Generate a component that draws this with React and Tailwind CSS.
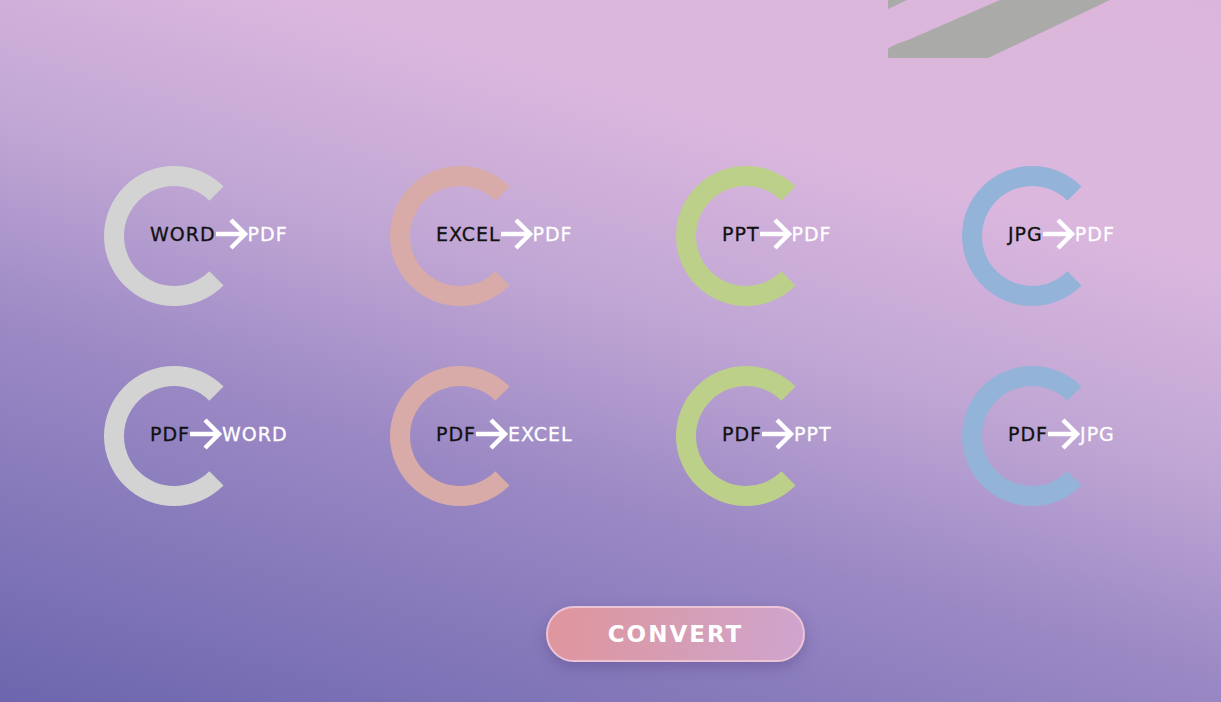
import React from 'react';

const conversions = [
  { from: 'WORD', to: 'PDF', color: '#d3d3d3' },
  { from: 'EXCEL', to: 'PDF', color: '#d8aba8' },
  { from: 'PPT', to: 'PDF', color: '#bdd08a' },
  { from: 'JPG', to: 'PDF', color: '#93b3d8' },
  { from: 'PDF', to: 'WORD', color: '#d3d3d3' },
  { from: 'PDF', to: 'EXCEL', color: '#d8aba8' },
  { from: 'PDF', to: 'PPT', color: '#bdd08a' },
  { from: 'PDF', to: 'JPG', color: '#93b3d8' }
];

// ring arc open on the right side, from 45deg to -45deg
const ringPath = () => {
  const cx = 70;
  const cy = 70;
  const ro = 70;
  const ri = 50;
  const a = (45 * Math.PI) / 180;
  const p = (r, s) => [cx + r * Math.cos(a), cy + s * r * Math.sin(a)];
  const [ox1, oy1] = p(ro, -1);
  const [ox2, oy2] = p(ro, 1);
  const [ix1, iy1] = p(ri, -1);
  const [ix2, iy2] = p(ri, 1);
  return `M${ox1} ${oy1} A${ro} ${ro} 0 1 0 ${ox2} ${oy2} L${ix2} ${iy2} A${ri} ${ri} 0 1 1 ${ix1} ${iy1} Z`;
};

const Arrow = () => (
  <svg width="32" height="34" viewBox="0 0 32 34" className="shrink-0">
    <path d="M0 17 H29 M15 3 L29 17 L15 31" fill="none" stroke="#fff" strokeWidth="4.5" strokeLinecap="butt" strokeLinejoin="miter" />
  </svg>
);

const ConvertItem = ({ from, to, color }) => (
  <div className="flex justify-center">
    <div className="relative w-[140px] h-[140px]">
      <svg width="140" height="140" viewBox="0 0 140 140">
        <path d={ringPath()} fill={color} />
      </svg>
      <div className="absolute left-[46px] top-[51px] flex items-center h-[34px] text-[19px] tracking-[1px] font-medium whitespace-nowrap font-['DejaVu_Sans',sans-serif] [-webkit-text-stroke:0.3px]">
        <span className="text-[#111]">{from}</span>
        <Arrow />
        <span className="text-white">{to}</span>
      </div>
    </div>
  </div>
);

const App = () => {
  return (
    <div className="relative w-full h-[702px] overflow-hidden bg-[linear-gradient(16deg,#6c66ae_0%,#9a88c4_35%,#c0a6d4_55%,#dbb7de_75%,#dcb6da_100%)]">
      <svg className="absolute left-[888px] top-0" width="230" height="58" viewBox="0 0 230 58">
        <path d="M0 0 L19 0 L0 9 Z" fill="#aaaaa8" />
        <path d="M0 49 Q6 44 20 40 L112 0 L222 0 L100 58 L0 58 Z" fill="#aaaaa8" />
      </svg>

      <div className="grid grid-cols-[repeat(4,286px)] gap-y-[60px] pl-[31px] pt-[166px]">
        {conversions.map((c) => (
          <ConvertItem key={c.from + c.to} {...c} />
        ))}
      </div>

      <div className="flex pl-[546px] pt-[100px]">
        <button
          type="button"
          className="w-[259px] h-[56px] rounded-full border-2 border-[#ecc4d6] bg-[linear-gradient(100deg,#e0959c_0%,#d59eb6_55%,#cfa4cf_100%)] shadow-[0_6px_14px_rgba(80,60,130,0.35)] text-white text-[23px] font-bold tracking-[2px] font-['DejaVu_Sans',sans-serif]"
        >
          CONVERT
        </button>
      </div>
    </div>
  );
};

export default App;
